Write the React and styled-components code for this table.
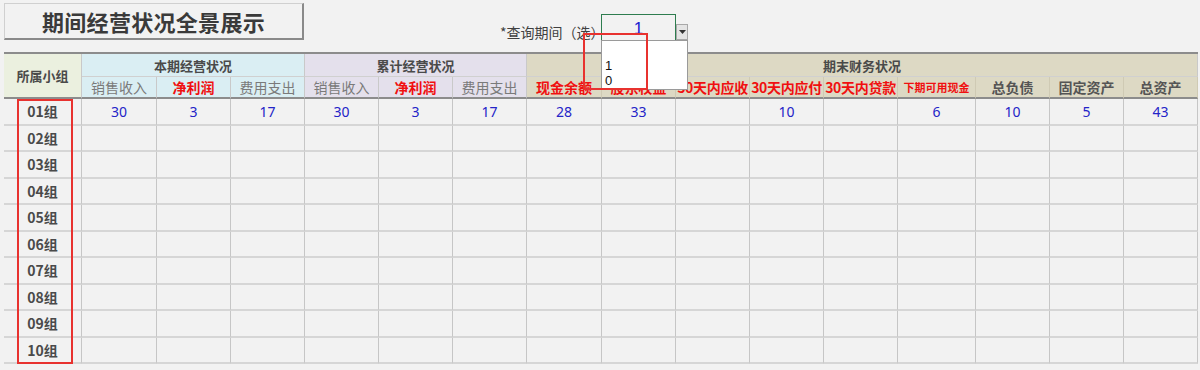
import React from "react";
import styled, { createGlobalStyle } from "styled-components";

const Global = createGlobalStyle`
  html, body { margin: 0; padding: 0; background: #f2f2f2; }
  body { font-family: "Noto Sans CJK SC", "Noto Sans", sans-serif; overflow: hidden; }
  * { box-sizing: border-box; }
`;

const Page = styled.div`
  width: 1200px;
  height: 370px;
  padding: 3px 0 0 4px;
  background: #f2f2f2;
`;

const TopBar = styled.div`
  display: flex;
  align-items: flex-start;
  height: 49px;
`;

const TitleBox = styled.div`
  width: 300px;
  height: 37px;
  display: flex;
  align-items: center;
  justify-content: center;
  border-top: 1px solid #d0d0d0;
  border-left: 1px solid #d0d0d0;
  border-right: 2px solid #8a8a8a;
  border-bottom: 2px solid #8a8a8a;
  font-size: 22px;
  font-weight: 700;
  color: #3a3a3a;
  letter-spacing: 0.3px;
`;

const Query = styled.div`
  display: flex;
  align-items: flex-start;
  margin-left: 196px;
  margin-top: 11px;
`;

const QueryLabel = styled.div`
  width: 101px;
  padding-top: 8px;
  font-size: 14px;
  color: #404040;
  white-space: nowrap;
`;

const InputWrap = styled.div`
  position: relative;
  display: flex;
  align-items: flex-start;
`;

const InputBox = styled.div`
  width: 75px;
  height: 26px;
  border: 1px solid #2e7d4f;
  border-bottom: none;
  display: flex;
  align-items: center;
  justify-content: center;
  color: #2020d0;
  font-size: 17px;
  font-family: "Liberation Sans", "Noto Sans CJK SC", sans-serif;
  padding-top: 2px;
`;

const ArrowBtn = styled.div`
  width: 12px;
  height: 16px;
  margin-top: 10px;
  background: #e4e4e4;
  border: 1px solid #a8a8a8;
  display: flex;
  align-items: center;
  justify-content: center;
`;

const DropList = styled.div`
  position: absolute;
  left: 0;
  top: 26px;
  width: 87px;
  height: 50px;
  background: #ffffff;
  border: 1px solid #9a9a9a;
  padding: 17px 0 0 3px;
  z-index: 5;
`;

const DropItem = styled.div`
  font-family: "Liberation Sans", sans-serif;
  font-size: 13px;
  line-height: 15px;
  color: #111;
`;

const Annot = styled.div`
  position: absolute;
  border: 2px solid #e8322f;
  z-index: 6;
  pointer-events: none;
`;

const TableWrap = styled.div`
  position: relative;
  width: 1194px;
`;

const Grid = styled.div`
  display: grid;
  grid-template-columns: 78px 75px 74px 74px 74px 74px 74px 75px 74px 74px 74px 74px 78px 74px 74px 74px;
  grid-template-rows: 23px 22px repeat(10, 26.5px);
  border-top: 2px solid #8c8c8c;
`;

const sectionBg = {
  group: "#ebf0df",
  cur: "#daeef3",
  cum: "#e4e0ec",
  end: "#ddd9c4",
};

const HeadCell = styled.div`
  grid-column: ${(p) => (p.$span ? `span ${p.$span}` : "auto")};
  grid-row: ${(p) => (p.$rows ? `span ${p.$rows}` : "auto")};
  background: ${(p) => sectionBg[p.$tone]};
  display: flex;
  align-items: center;
  justify-content: center;
  font-size: 13px;
  font-weight: 700;
  color: #4a4a4a;
  border-right: 1px solid #c9c9c9;
  border-bottom: ${(p) => (p.$last ? "2px solid #8c8c8c" : "1px solid #d0d0d0")};
  white-space: nowrap;
`;

const SubCell = styled.div`
  background: ${(p) => sectionBg[p.$tone]};
  display: flex;
  align-items: center;
  justify-content: center;
  font-size: ${(p) => (p.$small ? "11px" : "14px")};
  font-weight: ${(p) => (p.$kind === "plain" ? 400 : 700)};
  color: ${(p) => (p.$kind === "red" ? "#f01010" : p.$kind === "plain" ? "#7a7a7a" : "#555555")};
  border-right: 1px solid ${(p) => (p.$kind === "plain" || p.$tone !== "end" ? "#c9c9c9" : "#cfcab4")};
  border-bottom: 2px solid #8c8c8c;
  white-space: nowrap;
  letter-spacing: ${(p) => (p.$tight ? "-0.3px" : "0")};
`;

const GroupCell = styled.div`
  display: flex;
  align-items: center;
  justify-content: center;
  font-size: 14px;
  font-weight: 700;
  color: #4a4a4a;
  border-right: 1px solid #c6c6c6;
  border-bottom: 2px solid #d6d6d6;
  background: #f2f2f2;
`;

const DataCell = styled.div`
  display: flex;
  align-items: center;
  justify-content: center;
  font-family: "Noto Sans", "Noto Sans CJK SC", sans-serif;
  font-size: 14px;
  color: #2424c8;
  border-right: 1px solid #c6c6c6;
  border-bottom: 2px solid #d6d6d6;
  background: #f2f2f2;
`;

const subHeads = [
  { t: "销售收入", tone: "cur", kind: "plain" },
  { t: "净利润", tone: "cur", kind: "red" },
  { t: "费用支出", tone: "cur", kind: "plain" },
  { t: "销售收入", tone: "cum", kind: "plain" },
  { t: "净利润", tone: "cum", kind: "red" },
  { t: "费用支出", tone: "cum", kind: "plain" },
  { t: "现金余额", tone: "end", kind: "red" },
  { t: "股东权益", tone: "end", kind: "red" },
  { t: "30天内应收", tone: "end", kind: "red", tight: true },
  { t: "30天内应付", tone: "end", kind: "red", tight: true },
  { t: "30天内贷款", tone: "end", kind: "red", tight: true },
  { t: "下期可用现金", tone: "end", kind: "red", small: true },
  { t: "总负债", tone: "end", kind: "bold" },
  { t: "固定资产", tone: "end", kind: "bold" },
  { t: "总资产", tone: "end", kind: "bold" },
];

const rows = [
  { g: "01组", v: ["30", "3", "17", "30", "3", "17", "28", "33", "", "10", "", "6", "10", "5", "43"] },
  ...["02组", "03组", "04组", "05组", "06组", "07组", "08组", "09组", "10组"].map((g) => ({
    g,
    v: Array(15).fill(""),
  })),
];

function Arrow() {
  return (
    <svg width="7" height="4" viewBox="0 0 7 4">
      <path d="M0 0 L7 0 L3.5 4 Z" fill="#333" />
    </svg>
  );
}

export default function App() {
  return (
    <>
      <Global />
      <Page>
        <TopBar>
          <TitleBox>期间经营状况全景展示</TitleBox>
          <Query>
            <QueryLabel>*查询期间（选）</QueryLabel>
            <InputWrap>
              <InputBox>1</InputBox>
              <ArrowBtn>
                <Arrow />
              </ArrowBtn>
              <DropList>
                <DropItem>1</DropItem>
                <DropItem>0</DropItem>
              </DropList>
              <Annot style={{ left: -18, top: 19, width: 65, height: 57 }} />
            </InputWrap>
          </Query>
        </TopBar>
        <TableWrap>
          <Grid>
            <HeadCell $tone="group" $rows={2} $last>
              所属小组
            </HeadCell>
            <HeadCell $tone="cur" $span={3}>本期经营状况</HeadCell>
            <HeadCell $tone="cum" $span={3}>累计经营状况</HeadCell>
            <HeadCell $tone="end" $span={9}>期末财务状况</HeadCell>
            {subHeads.map((s, i) => (
              <SubCell key={i} $tone={s.tone} $kind={s.kind} $small={s.small} $tight={s.tight}>
                {s.t}
              </SubCell>
            ))}
            {rows.map((r) => (
              <React.Fragment key={r.g}>
                <GroupCell>{r.g}</GroupCell>
                {r.v.map((v, i) => (
                  <DataCell key={i}>{v}</DataCell>
                ))}
              </React.Fragment>
            ))}
          </Grid>
          <Annot style={{ left: 13, top: 47, width: 56, height: 265 }} />
        </TableWrap>
      </Page>
    </>
  );
}
